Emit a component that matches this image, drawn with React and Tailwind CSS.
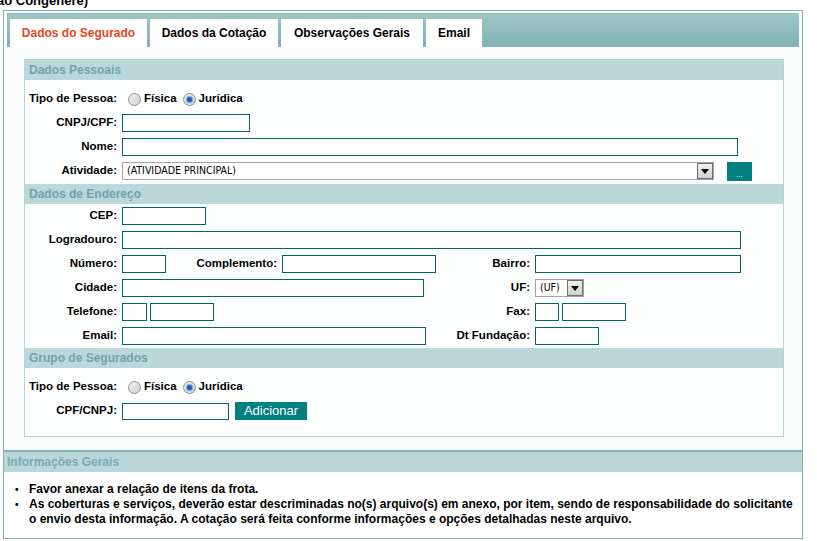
import React from 'react';

const font = { fontFamily: '"Liberation Sans", Arial, sans-serif' };

function Radio({ checked }) {
  return (
    <span className="relative inline-block w-[13px] h-[13px] rounded-full border border-[#8f8f8f] bg-gradient-to-br from-[#f4f4f4] to-[#cfcfcf] shrink-0">
      {checked && (
        <span className="absolute left-[3px] top-[3px] w-[5px] h-[5px] rounded-full bg-[#1f5fbf] shadow-[0_0_1px_1px_#6d9be0]" />
      )}
    </span>
  );
}

function Input({ w, h = 'h-[18px]' }) {
  return <div className={`${w} ${h} border border-[#00665f] bg-white shrink-0`} />;
}

function Label({ children, w = 'w-[97px]' }) {
  return <div className={`${w} text-right text-[11.5px] font-bold text-black pr-[5px] shrink-0 whitespace-nowrap`}>{children}</div>;
}

function Row({ children }) {
  return <div className="flex items-center h-[24px]">{children}</div>;
}

function Select({ w, text }) {
  return (
    <div className={`${w} h-[18px] border border-[#a3a3a3] bg-white flex items-center shrink-0`}>
      <span className="flex-1 pl-[4px] text-[10.5px] text-black truncate" style={{ fontFamily: '"DejaVu Sans Condensed", sans-serif' }}>{text}</span>
      <span className="w-[16px] h-[16px] border border-[#6f6f6f] bg-gradient-to-b from-[#f0f0f0] to-[#cfcfcf] flex items-center justify-center">
        <svg width="8" height="5" viewBox="0 0 8 5"><path d="M0 0h8L4 5z" fill="#000" /></svg>
      </span>
    </div>
  );
}

function SectionHeader({ children }) {
  return <div className="h-[20px] bg-[#bbd7da] text-[12px] font-bold text-[#6ea3a8] pl-[4px] leading-[20px]">{children}</div>;
}

function TipoPessoa() {
  return (
    <Row>
      <Label>Tipo de Pessoa:</Label>
      <div className="flex items-center text-[11.5px] font-bold text-black">
        <span className="ml-[6px] flex"><Radio /></span>
        <span className="ml-[3px]">Física</span>
        <span className="ml-[6px] flex"><Radio checked /></span>
        <span className="ml-[3px]">Jurídica</span>
      </div>
    </Row>
  );
}

export default function App() {
  return (
    <div className="w-[817px] h-[541px] bg-white overflow-hidden" style={font}>
      <div className="h-[10px] -ml-[3px]">
        <div className="text-[13px] font-bold text-black leading-[2px]">ão Congênere)</div>
      </div>
      <div className="ml-[3px] w-[800px] border border-[#7fb3b3] bg-[#fbfdfd] pt-[2px] px-[3px]">
        {/* tabs */}
        <div className="h-[34px] border-t border-[#88b8b8] bg-gradient-to-b from-[#9fc5c5] to-[#80b3b3] flex items-end pl-[3px] gap-[3px]">
          <div className="w-[137px] h-[28px] bg-white text-[12px] font-bold text-[#e8461e] flex items-center justify-center">Dados do Segurado</div>
          <div className="w-[128px] h-[28px] bg-white text-[12px] font-bold text-black flex items-center justify-center">Dados da Cotação</div>
          <div className="w-[142px] h-[28px] bg-white text-[12px] font-bold text-black flex items-center justify-center">Observações Gerais</div>
          <div className="w-[56px] h-[28px] bg-white text-[12px] font-bold text-black flex items-center justify-center">Email</div>
        </div>
        {/* content */}
        <div className="pt-[12px] pl-[17px] pr-[15px] pb-[13px]">
          <div className="border border-[#b8d3d6] bg-[#fdfefe]">
            <SectionHeader>Dados Pessoais</SectionHeader>
            <div className="pt-[7px] pb-[1px]">
              <TipoPessoa />
              <Row><Label>CNPJ/CPF:</Label><Input w="w-[128px]" /></Row>
              <Row><Label>Nome:</Label><Input w="w-[616px]" /></Row>
              <Row>
                <Label>Atividade:</Label>
                <Select w="w-[592px]" text="(ATIVIDADE PRINCIPAL)" />
                <div className="ml-[13px] w-[25px] h-[19px] bg-[#008080] flex items-end justify-center pb-[3px]">
                  <span className="text-[8px] leading-[6px] text-white">...</span>
                </div>
              </Row>
            </div>
            <SectionHeader>Dados de Endereço</SectionHeader>
            <div>
              <Row><Label>CEP:</Label><Input w="w-[84px]" /></Row>
              <Row><Label>Logradouro:</Label><Input w="w-[619px]" /></Row>
              <Row>
                <Label>Número:</Label>
                <Input w="w-[44px]" />
                <Label w="w-[116px]">Complemento:</Label>
                <Input w="w-[154px]" />
                <Label w="w-[99px]">Bairro:</Label>
                <Input w="w-[206px]" />
              </Row>
              <Row>
                <Label>Cidade:</Label>
                <Input w="w-[302px]" />
                <Label w="w-[111px]">UF:</Label>
                <Select w="w-[49px]" text="(UF)" />
              </Row>
              <Row>
                <Label>Telefone:</Label>
                <Input w="w-[25px]" />
                <div className="w-[3px]" />
                <Input w="w-[64px]" />
                <Label w="w-[321px]">Fax:</Label>
                <Input w="w-[24px]" />
                <div className="w-[3px]" />
                <Input w="w-[64px]" />
              </Row>
              <Row>
                <Label>Email:</Label>
                <Input w="w-[304px]" />
                <Label w="w-[109px]">Dt Fundação:</Label>
                <Input w="w-[64px]" />
              </Row>
            </div>
            <SectionHeader>Grupo de Segurados</SectionHeader>
            <div className="pt-[7px] pb-[13px]">
              <TipoPessoa />
              <Row>
                <Label>CPF/CNPJ:</Label>
                <Input w="w-[107px]" h="h-[17px]" />
                <div className="ml-[6px] w-[72px] h-[18px] bg-[#008080] text-white text-[13px] flex items-center justify-center">Adicionar</div>
              </Row>
            </div>
          </div>
        </div>
      </div>
      {/* Informações Gerais */}
      <div className="ml-[3px] w-[800px] h-[88px] border border-[#7fb3b3] bg-white">
        <div className="h-[20px] bg-[#bbd7da] text-[12px] font-bold text-[#78abaf] pl-[3px] leading-[20px]">Informações Gerais</div>
        <ul className="pt-[10px] pl-[11px] pr-[8px] text-[12px] font-bold text-black leading-[15px]">
          <li className="flex"><span className="w-[14px] shrink-0 text-[10px]">•</span><span>Favor anexar a relação de itens da frota.</span></li>
          <li className="flex"><span className="w-[14px] shrink-0 text-[10px]">•</span><span>As coberturas e serviços, deverão estar descriminadas no(s) arquivo(s) em anexo, por item, sendo de responsabilidade do solicitante o envio desta informação. A cotação será feita conforme informações e opções detalhadas neste arquivo.</span></li>
        </ul>
      </div>
    </div>
  );
}
